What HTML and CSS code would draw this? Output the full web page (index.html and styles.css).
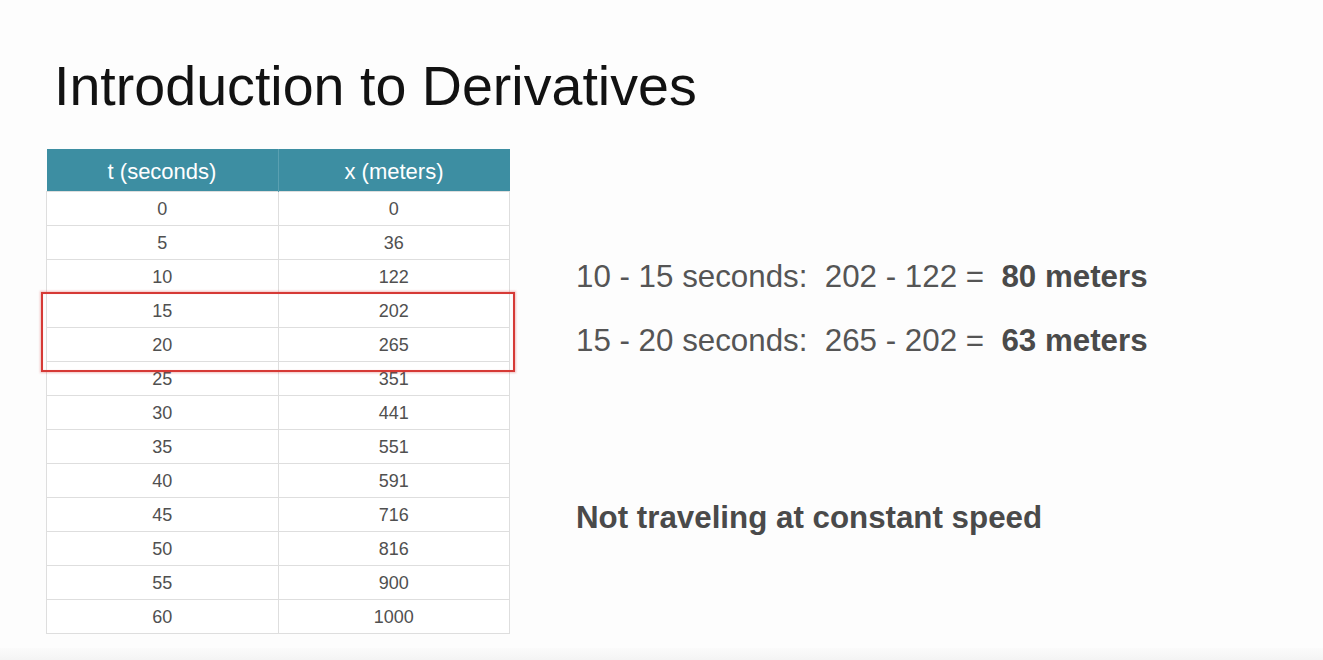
FILE: index.html
```html
<!DOCTYPE html>
<html>
<head>
<meta charset="utf-8">
<link rel="stylesheet" href="styles.css">
</head>
<body>
<div class="slide">
  <h1 class="title">Introduction to Derivatives</h1>
  <div class="content">
    <div class="table-wrap">
      <table class="data">
        <thead>
          <tr><th>t (seconds)</th><th>x (meters)</th></tr>
        </thead>
        <tbody>
          <tr><td>0</td><td>0</td></tr>
          <tr><td>5</td><td>36</td></tr>
          <tr><td>10</td><td>122</td></tr>
          <tr><td>15</td><td>202</td></tr>
          <tr><td>20</td><td>265</td></tr>
          <tr><td>25</td><td>351</td></tr>
          <tr><td>30</td><td>441</td></tr>
          <tr><td>35</td><td>551</td></tr>
          <tr><td>40</td><td>591</td></tr>
          <tr><td>45</td><td>716</td></tr>
          <tr><td>50</td><td>816</td></tr>
          <tr><td>55</td><td>900</td></tr>
          <tr><td>60</td><td>1000</td></tr>
        </tbody>
      </table>
      <div class="highlight"></div>
    </div>
    <div class="notes">
      <p class="line">10 - 15 seconds:&nbsp; 202 - 122 =&nbsp; <b>80 meters</b></p>
      <p class="line line2">15 - 20 seconds:&nbsp; 265 - 202 =&nbsp; <b>63 meters</b></p>
      <p class="line line3"><b>Not traveling at constant speed</b></p>
    </div>
  </div>
</div>
<div class="footer-strip"></div>
</body>
</html>
```
FILE: styles.css
```css
html, body {
  margin: 0;
  padding: 0;
}
body {
  width: 1323px;
  height: 660px;
  background: #fdfdfd;
  font-family: "Liberation Sans", Arial, sans-serif;
  display: flex;
  flex-direction: column;
  overflow: hidden;
}
.slide {
  flex: 1;
  padding: 54px 0 0 46px;
}
.title {
  margin: 0 0 31px 0;
  padding-left: 8px;
  font-size: 55.6px;
  line-height: 64px;
  font-weight: normal;
  color: #121212;
}
.content {
  display: flex;
  align-items: flex-start;
}
.table-wrap {
  position: relative;
  width: 464px;
}
.data {
  width: 464px;
  border-collapse: collapse;
  table-layout: fixed;
}
.data th {
  background: #3d8ea2;
  color: #ffffff;
  font-weight: normal;
  font-size: 22px;
  height: 38px;
  padding: 4px 0 0 0;
  text-align: center;
  border-right: 1px solid #5aa0b1;
}
.data th:last-child {
  border-right: none;
}
.data td {
  height: 31px;
  padding: 2px 0 0 0;
  text-align: center;
  font-size: 18px;
  color: #505050;
  background: #ffffff;
  border: 1px solid #dedede;
}
.highlight {
  position: absolute;
  left: -5px;
  top: 143px;
  width: 470px;
  height: 76px;
  border: 2px solid #d63a36;
  box-shadow: 0 0 2px 1px rgba(210, 50, 50, 0.3), inset 0 0 1px rgba(210, 50, 50, 0.3);
}
.notes {
  margin-left: 66px;
  padding-top: 108px;
  color: #555555;
}
.line {
  margin: 0;
  font-size: 31.3px;
  line-height: 40px;
  white-space: nowrap;
}
.line b {
  color: #4a4a4a;
}
.line2 {
  margin-top: 24px;
}
.line3 {
  margin-top: 137px;
}
.footer-strip {
  height: 12px;
  background: linear-gradient(#fbfbfb, #f4f4f4);
}
```
